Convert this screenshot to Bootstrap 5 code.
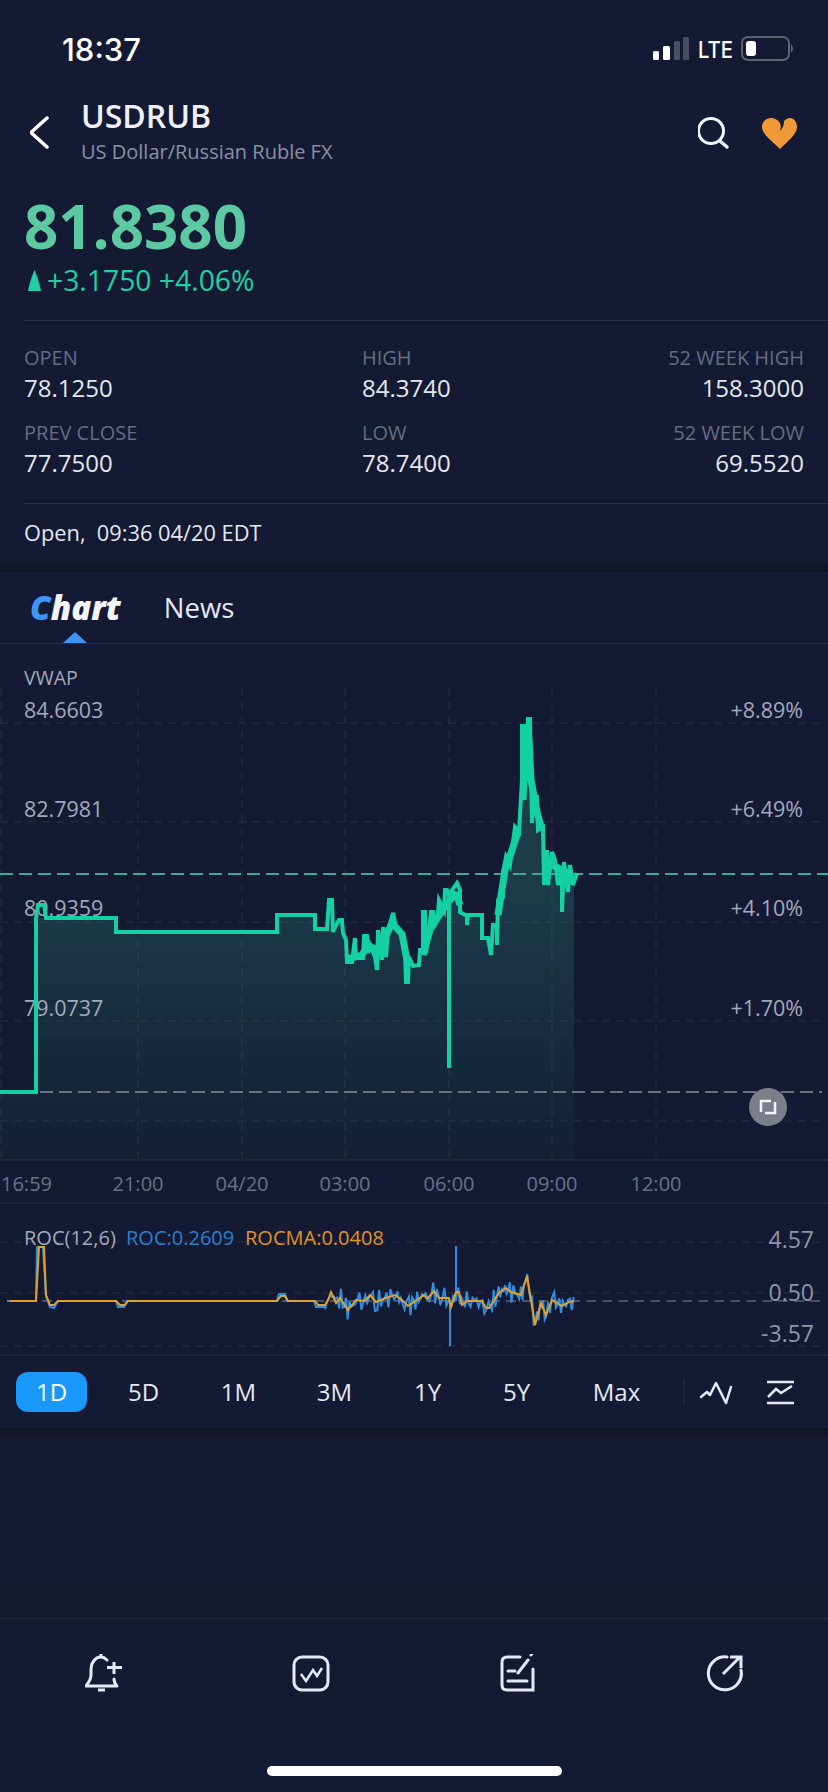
<!DOCTYPE html>
<html lang="en">
<head>
  <meta charset="utf-8" />
  <meta name="viewport" content="width=device-width, initial-scale=1" />
  <title>USDRUB</title>
  <link href="https://cdn.jsdelivr.net/npm/bootstrap@5.3.2/dist/css/bootstrap.min.css" rel="stylesheet" />
  <style>
    body {
      background-color: #141a33;
      font-family: "Open Sans", "Noto Sans", sans-serif;
      color: #e6e9f5;
    }
    .pantalla { width: 828px; height: 1792px; overflow: hidden; }
    svg { display: block; }

    .status-bar { height: 100px; padding: 32px 31px 0 62px; align-items: flex-start; }
    .status-time { font-family: Inter, sans-serif; font-weight: 500; font-size: 31px; line-height: 36px; color: #fff; }
    .status-icons { margin-top: 3px; }

    .top-header { height: 64px; padding: 0 30px; }
    .title-main { font-size: 32px; font-weight: 600; line-height: 30px; margin: 1px 0 7px; color: #eef0f8; }
    .title-sub { font-size: 20px; line-height: 28px; color: #8b8fa3; }
    .quote { height: 156px; padding: 27px 0 0 24px; }
    .price-big { font-size: 60px; font-weight: 700; line-height: 70px; color: #5cc9a2; }
    .price-change { font-size: 28.300px; line-height: 34px; margin-top: 2px; color: #1fd0a6; gap: 6px; }

    .linea { border-top: 1px solid #2a2f45; margin-left: 24px; }
    .stats { padding: 25px 24px 26px 24px; row-gap: 19px; display: grid; grid-template-columns: 338px 1fr auto; }
    .stat-label { font-size: 20px; line-height: 24px; color: #666c82; margin-bottom: 4px; }
    .stat-value { font-size: 24px; line-height: 28px; color: #e4e7ef; }
    .market-state { height: 56px; padding: 14px 0 0 24px; font-size: 21.800px; line-height: 30px; color: #e4e7ef; white-space: pre; }

    .banda { height: 12px; background: linear-gradient(#141a30, #111626); }
    .tabs-bar { height: 72px; padding-left: 30px; border-bottom: 1px solid #2a2f45; position: relative; gap: 43px; }
    .tab-chart { font-size: 33px; font-weight: 800; font-style: italic; color: #f2f4fb; line-height: 40px; }
    .tab-chart span { color: #3d95f5; }
    .tab-news { font-size: 27.500px; color: #e4e8f5; line-height: 40px; }
    .tab-arrow {
      position: absolute; left: 63px; bottom: 0; width: 0; height: 0;
      border-left: 12.500px solid transparent; border-right: 12.500px solid transparent; border-bottom: 11px solid #3d95f5;
    }

    .range-bar { height: 72px; padding: 16px 0 0 16px; position: relative; align-items: flex-start; }
    .range-btn {
      width: 71px; height: 40px; padding: 0; border: 0; border-radius: 12px;
      font-family: "Open Sans", sans-serif; font-size: 24px; font-weight: 500; line-height: 40px; color: #e4e8f5; background: transparent;
    }
    .range-btn:nth-child(2) { margin-left: 21px; }
    .range-btn:nth-child(3) { margin-left: 24px; }
    .range-btn:nth-child(4) { margin-left: 25px; }
    .range-btn:nth-child(5) { margin-left: 22px; }
    .range-btn:nth-child(6) { margin-left: 18px; }
    .range-btn:nth-child(7) { margin-left: 29px; }
    .range-btn.activo { background-color: #1a98fa; color: #fff; }
    .range-icons { position: absolute; left: 680px; top: 0; }
    .fondo-bajo { height: 190px; background: linear-gradient(#111626, #141a33 12px, #141a33 150px, #141a2d); }
    .bottom-bar { height: 174px; border-top: 1px solid #23283c; padding-top: 35px; }
    .home-bar { width: 295px; height: 10px; background: #fff; border-radius: 5px; margin: 0 auto; position: relative; top: 72px; }
  </style>
</head>
<body>
  <div class="pantalla">
    <!-- Barra de estado -->
    <div class="status-bar d-flex justify-content-between">
      <div class="status-time">18:37</div>
      <svg class="status-icons" width="144" height="28" viewBox="653 36 144 28">
        <rect x="653" y="52" width="6" height="9" rx="1.500" fill="#fff" />
        <rect x="663" y="47" width="7" height="14" rx="1.500" fill="#fff" />
        <rect x="674" y="42" width="6" height="19" rx="1.500" fill="#4a4f63" />
        <rect x="683" y="38" width="6" height="23" rx="1.500" fill="#4a4f63" />
        <text x="698" y="59" font-size="23" font-weight="500" font-family="Inter, sans-serif" fill="#fff" textLength="35" lengthAdjust="spacingAndGlyphs">LTE</text>
        <rect x="742" y="38" width="47" height="23" rx="6" fill="none" stroke="#5d6275" stroke-width="2" />
        <rect x="746" y="42" width="10" height="15" rx="3" fill="#fff" />
        <path d="M791 45 q4 4.500 0 9z" fill="#5d6275" />
      </svg>
    </div>

    <!-- Cabecera -->
    <div class="top-header d-flex align-items-start">
      <svg width="51" height="64" viewBox="30 100 51 64">
        <path d="M47 118 L31 132.500 L47 147" fill="none" stroke="#fff" stroke-width="3.500" stroke-linecap="round" stroke-linejoin="round" />
      </svg>
      <div class="flex-grow-1">
        <div class="title-main">USDRUB</div>
        <div class="title-sub">US Dollar/Russian Ruble FX</div>
      </div>
      <svg width="100" height="64" viewBox="698 100 100 64">
        <circle cx="711" cy="131" r="12.500" fill="none" stroke="#f2f4fb" stroke-width="3" />
        <path d="M720 141 L727 147" stroke="#f2f4fb" stroke-width="3.500" stroke-linecap="round" />
        <path d="M780 149 C772 141 762 134 762 127 C762 121 767 118 771 118 C775 118 778 120 780 123 C781 126 781 128 780 131 C783 128 784 125 784 121 C786 119 788 118 790 118 C794 118 797 122 797 127 C797 134 788 141 780 149Z" fill="#f09a37" />
      </svg>
    </div>

    <!-- Precio -->
    <div class="quote">
      <div class="price-big">81.8380</div>
      <div class="price-change d-flex align-items-center">
        <svg width="13" height="21" viewBox="0 0 13 21" class="ms-1"><path d="M6.500 0 C8.500 4 12 15 13 21 L0 21 C1 15 4.500 4 6.500 0Z" fill="#1fd0a6" /></svg>
        <span>+3.1750 +4.06%</span>
      </div>
    </div>
    <div class="linea"></div>

    <!-- Datos -->
    <div class="stats">
      <div><div class="stat-label">OPEN</div><div class="stat-value">78.1250</div></div>
      <div><div class="stat-label">HIGH</div><div class="stat-value">84.3740</div></div>
      <div class="text-end"><div class="stat-label">52 WEEK HIGH</div><div class="stat-value">158.3000</div></div>
      <div><div class="stat-label">PREV CLOSE</div><div class="stat-value">77.7500</div></div>
      <div><div class="stat-label">LOW</div><div class="stat-value">78.7400</div></div>
      <div class="text-end"><div class="stat-label">52 WEEK LOW</div><div class="stat-value">69.5520</div></div>
    </div>
    <div class="linea"></div>
    <div class="market-state">Open,  09:36 04/20 EDT</div>
    <div class="banda"></div>

    <!-- Pestañas -->
    <div class="tabs-bar d-flex align-items-center">
      <div class="tab-chart"><span>C</span>hart</div>
      <div class="tab-news">News</div>
      <div class="tab-arrow"></div>
    </div>

    <!-- Grafica principal -->
    <svg width="828" height="560" viewBox="0 644 828 560">
      <defs>
        <linearGradient id="relleno" x1="0" y1="880" x2="0" y2="1160" gradientUnits="userSpaceOnUse">
          <stop offset="0" stop-color="#3cc4b0" stop-opacity=".2" />
          <stop offset="1" stop-color="#14c0a5" stop-opacity=".03" />
        </linearGradient>
      </defs>
      <g stroke="#2a2f45" stroke-width="1" stroke-dasharray="8 6">
        <path d="M0 723H822M0 822H822M0 922H822M0 1021H822M0 1121H822" />
        <path d="M1 688V1160M138 688V1160M242 688V1160M345 688V1160M449 688V1160M552 688V1160M656 688V1160" />
      </g>
      <path fill="url(#relleno)" d="M0 1092H36V918H116V932H277V915H315V929H327L329 900H332L333 932 339 920H342L347 962H352L355 938 356 958H363L364 936H367L368 953 370 945 375 957 377 970 378 930 382 960 383 927 386 957 388 930 393 913 396 927 402 935 405 950 406 982H408L409 957 413 966 419 965 420 950H423V912H425L426 953 429 930 431 912H433L434 927 438 913 439 900 444 910 445 890H447L452 890 457 883 460 890V912L467 916H482V938H488L491 955 493 925H497V900L503 897V873L506 857 510 865 515 827 519 832 522 780V726H524L526 780 528 719H530L532 823 533 797H537L538 830 543 827 544 885 547 850 548 885 552 852 555 860 558 885 562 867 564 862 568 892 570 865 574 885V1160H0Z" />
      <path d="M0 1160H828" stroke="#2a2f45" stroke-width="1" />
      <path d="M0 874H828" stroke="#3ea99a" stroke-width="2" stroke-dasharray="13 6" />
      <path d="M40 1092H822" stroke="#6b7082" stroke-width="2" stroke-dasharray="13 6" />
      <g font-size="21.500" fill="#a4a8bb">
        <text x="24" y="685" font-size="19.500">VWAP</text>
        <text x="24" y="718">84.6603</text>
        <text x="24" y="817">82.7981</text>
        <text x="24" y="916">80.9359</text>
        <text x="24" y="1016">79.0737</text>
        <g text-anchor="end">
          <text x="803" y="718">+8.89%</text>
          <text x="803" y="817">+6.49%</text>
          <text x="803" y="916">+4.10%</text>
          <text x="803" y="1016">+1.70%</text>
        </g>
      </g>
      <path fill="none" stroke="#14d0a5" stroke-width="4" d="M0 1092H36V918L38 905H44L46 918H116V932H277V915H315V929H327L329 900H332L333 932 335 927 339 920H342L343 933 346 940 347 962H352L355 938 356 958H363L364 936H367L368 953 370 945 375 957 377 970 378 930 382 960 383 927 386 957 388 930 393 913 396 927 402 935 405 950 406 982H408L409 957 413 966 419 965 420 950H423V912H425L426 953 429 930 431 912H433L434 927 438 913 439 900 444 910 445 890H447L449 895V1068 895L452 890 457 883 460 890V912L467 916 467 925 468 915H482V938H488L491 955 493 925H497V945L498 900 503 897V873L506 857 510 865 515 827 519 832 522 780V726H524L526 780 528 719H530L532 823 533 797H537L538 830 543 827 544 885 547 850 548 885 552 852 555 860 558 885 562 867V912L564 862 568 892 570 865 573 885 577 873" />
      <!-- tramos con mas ruido, linea mas gorda -->
      <path fill="none" stroke="#14d0a5" stroke-width="7" stroke-linejoin="bevel" d="M347 958 352 958 362 955 368 945 376 950 384 940 392 923 402 934 407 960M423 955 430 930 438 917 446 905 456 893 460 905M498 915 505 870 512 850 518 832M523 800 525 760 529 740 531 780 537 812 542 830M546 860 552 865 558 868 566 872 572 874" />
      <g font-size="20" fill="#6b7088">
        <text x="1" y="1191">16:59</text>
        <g text-anchor="middle">
          <text x="138" y="1191">21:00</text>
          <text x="242" y="1191">04/20</text>
          <text x="345" y="1191">03:00</text>
          <text x="449" y="1191">06:00</text>
          <text x="552" y="1191">09:00</text>
          <text x="656" y="1191">12:00</text>
        </g>
      </g>
      <circle cx="768" cy="1107" r="19" fill="#7c7f8a" />
      <path d="M761 1112V1101H771M775 1102V1113H765" fill="none" stroke="#f2f4fb" stroke-width="2.500" />
      <path d="M0 1203H828" stroke="#2a2f45" stroke-width="1" />
    </svg>

    <!-- Indicador ROC -->
    <svg width="828" height="152" viewBox="0 1204 828 152">
      <g stroke="#2a2f45" stroke-width="1" stroke-dasharray="8 6">
        <path d="M0 1242H822M0 1293H822M0 1346H822" />
      </g>
      <path d="M10 1301H822" stroke="#5d6275" stroke-width="1.500" stroke-dasharray="10 6" />
      <g font-size="20">
        <text x="24" y="1245" fill="#a4a8bb">ROC(12,6)</text>
        <text x="126" y="1245" fill="#2a7fd0">ROC:0.2609</text>
        <text x="245" y="1245" fill="#e0922a">ROCMA:0.0408</text>
      </g>
      <g font-size="23" fill="#8f94a8" text-anchor="end">
        <text x="814" y="1248">4.57</text>
        <text x="814" y="1301">0.50</text>
        <text x="814" y="1342">-3.57</text>
      </g>
      <path id="rocAzul" fill="none" stroke="#2f8fe0" stroke-width="2" d="M7 1301H36L37 1247H43L46 1296 50 1307 54 1308 58 1301H116L118 1307H124L127 1301H277L279 1294H285L287 1301H314L316 1307H324" />
      <path d="M450 1301V1346M456 1301V1246" stroke="#2f8fe0" stroke-width="2" />
      <path id="rocNaranja" fill="none" stroke="#e2a02f" stroke-width="2" d="M10 1301H36L39 1247H44L46 1295 50 1305H54L58 1301H116L120 1305H125L128 1301H277L281 1296H285L288 1301H315L318 1305H325L328 1300 331 1292 336 1303 340 1298 348 1310 356 1300 365 1301 370 1295 376 1302 386 1298 395 1295 402 1300 408 1306 414 1302 424 1295 427 1299 434 1291 439 1298H449L451 1307 456 1292H459L462 1305 467 1301H482L486 1308H489L499 1293 506 1288 511 1292 521 1295 527 1276 531 1300 535 1325 541 1303 546 1315 552 1300 562 1306 569 1302 574 1301" />
      <path d="M0 1355H828" stroke="#2a2f45" stroke-width="1" />
    </svg>

    <!-- Rangos -->
    <div class="range-bar d-flex">
      <button class="btn range-btn activo">1D</button>
      <button class="btn range-btn">5D</button>
      <button class="btn range-btn">1M</button>
      <button class="btn range-btn">3M</button>
      <button class="btn range-btn">1Y</button>
      <button class="btn range-btn">5Y</button>
      <button class="btn range-btn">Max</button>
      <svg class="range-icons" width="120" height="60" viewBox="680 1356 120 60">
        <path d="M684 1378V1405" stroke="#2a2f45" />
        <path d="M701 1397 707 1392 710 1395 716 1383 726 1403 731 1387" fill="none" stroke="#e6e9f5" stroke-width="2.500" stroke-linejoin="round" stroke-linecap="round" />
        <path d="M767 1382H794M767 1403H794" stroke="#e6e9f5" stroke-width="2.500" />
        <path d="M768 1397 776 1389 781 1393 792 1386" fill="none" stroke="#e6e9f5" stroke-width="2.500" />
      </svg>
    </div>
    <div class="fondo-bajo"></div>

    <!-- Acciones -->
    <div class="bottom-bar">
      <div class="row g-0 text-center">
        <div class="col-3 d-flex justify-content-center">
          <svg width="38" height="40" viewBox="0 0 38 40">
            <path d="M22 6 C20 4 18 3 16 3 C10 3 6 9 6 15 V21 C6 26 3 29 1 32 H32 C30 30 29 28 29 25" fill="none" stroke="#e6e9f5" stroke-width="3" stroke-linecap="round" stroke-linejoin="round" />
            <path d="M16 0V3M29 8V20M22 13.500H37M13 36H20" stroke="#e6e9f5" stroke-width="3" />
          </svg>
        </div>
        <div class="col-3 d-flex justify-content-center">
          <svg width="38" height="40" viewBox="0 0 38 40">
            <rect x="2" y="3" width="34" height="33" rx="8" fill="none" stroke="#e6e9f5" stroke-width="3" />
            <path d="M9 20 L14 27 L21 16 L25 22 L30 14" fill="none" stroke="#e6e9f5" stroke-width="2.500" />
          </svg>
        </div>
        <div class="col-3 d-flex justify-content-center">
          <svg width="38" height="40" viewBox="0 0 38 40">
            <path d="M21 3 H8 Q3 3 3 8 V31 Q3 36 8 36 H34 V15" fill="none" stroke="#e6e9f5" stroke-width="3" stroke-linecap="round" />
            <path d="M19 19 L29 6 M32 1 L34 -2 M9 17H16M9 27H28" stroke="#e6e9f5" stroke-width="3" stroke-linecap="round" />
          </svg>
        </div>
        <div class="col-3 d-flex justify-content-center">
          <svg width="38" height="40" viewBox="0 0 38 40">
            <path d="M21 3 A16.500 16.500 0 1 0 35 16" fill="none" stroke="#e6e9f5" stroke-width="3" stroke-linecap="round" />
            <path d="M17 20 L34 3 M24 3 H35 V14" fill="none" stroke="#e6e9f5" stroke-width="3" />
          </svg>
        </div>
      </div>
      <div class="home-bar"></div>
    </div>
  </div>

  <script>
    // la linea azul del ROC sigue a la naranja con ruido, desde x=325
    const naranja = document.getElementById("rocNaranja");
    const azul = document.getElementById("rocAzul");
    const largo = naranja.getTotalLength();
    const puntos = [];
    for (let i = 0, s = 0; i <= largo; i += 1) {
      const p = naranja.getPointAtLength(i);
      if (p.x < 325 || p.x < s) continue;
      s = p.x + 1.5;
      const ruido = Math.sin(p.x * 2.3) * 6 + Math.sin(p.x * 5.1) * 5;
      puntos.push(p.x.toFixed(1) + " " + (p.y + ruido).toFixed(1));
    }
    azul.setAttribute("d", azul.getAttribute("d") + "L" + puntos.join(" "));
  </script>
  <script src="https://cdn.jsdelivr.net/npm/bootstrap@5.3.2/dist/js/bootstrap.bundle.min.js"></script>
</body>
</html>
